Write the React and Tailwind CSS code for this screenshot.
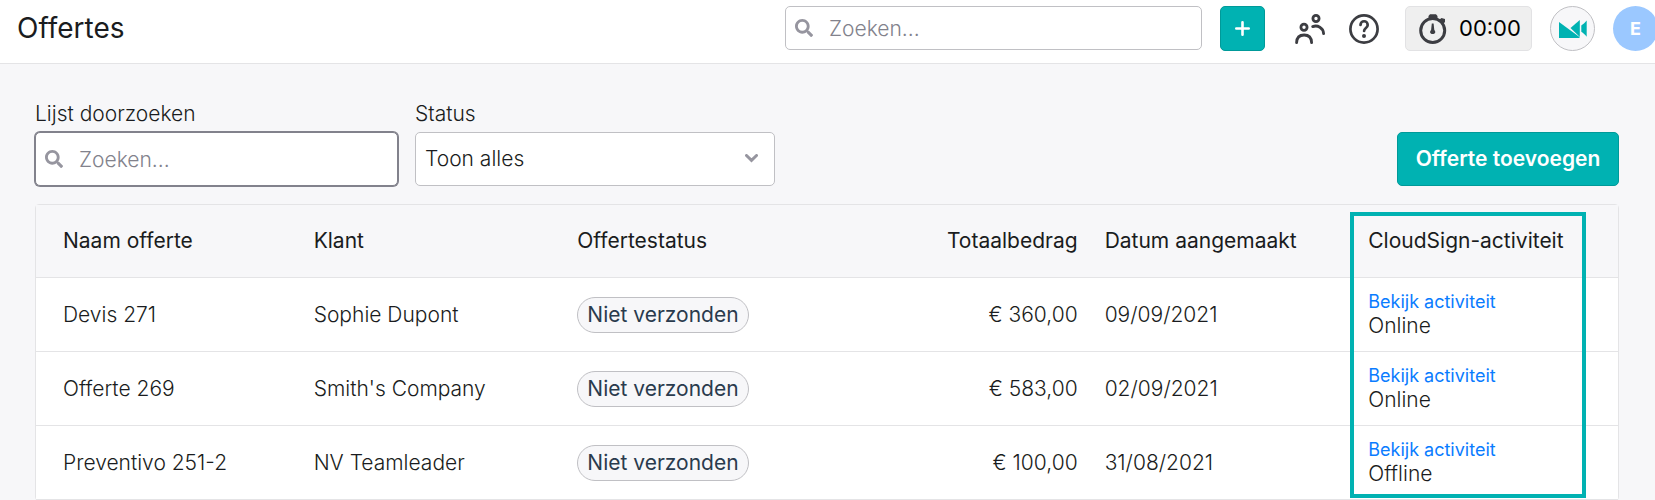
import { FaSearch } from 'react-icons/fa';

const quotations = [
  { name: 'Devis 271', customer: 'Sophie Dupont', status: 'Niet verzonden', total: '€ 360,00', created: '09/09/2021', activity: 'Online' },
  { name: 'Offerte 269', customer: "Smith's Company", status: 'Niet verzonden', total: '€ 583,00', created: '02/09/2021', activity: 'Online' },
  { name: 'Preventivo 251-2', customer: 'NV Teamleader', status: 'Niet verzonden', total: '€ 100,00', created: '31/08/2021', activity: 'Offline' },
];

function PeopleIcon() {
  return (
    <svg width="30" height="30" viewBox="0 0 30 30" fill="none" stroke="currentColor" strokeWidth="2.8" strokeLinecap="round" aria-hidden="true">
      <circle cx="21" cy="4.5" r="3.1" />
      <circle cx="9" cy="13.3" r="3.1" />
      <path d="M17.7 12.6c4.8-1.8 10.6 1 10.9 7" />
      <path d="M1.6 28.6c.2-5.2 3.2-7.6 7.5-7.6s7.3 2.4 7.5 7.6" />
    </svg>
  );
}

function HelpIcon() {
  return (
    <svg width="30" height="30" viewBox="0 0 30 30" fill="none" stroke="currentColor" strokeWidth="2.7" strokeLinecap="round" aria-hidden="true">
      <circle cx="15" cy="15" r="13.6" />
      <path d="M11.5 11c0-5 7.2-5 7.2 0 0 3-3.6 3-3.6 6" />
      <circle cx="15" cy="22" r="2" fill="currentColor" stroke="none" />
    </svg>
  );
}

function TimerIcon() {
  return (
    <svg width="28" height="30" viewBox="0 0 28 30" fill="none" stroke="currentColor" aria-hidden="true">
      <circle cx="13.7" cy="16.5" r="12" strokeWidth="3" />
      <path d="M9.5 4.5V2L11 .3h6L18.5 2v2.5zM20.5 5.5l2-1.5 3.5 1v3l-1.5 1.5z" fill="currentColor" stroke="none" />
      <path d="M12.8 9.5h1.8l.7 6.5c2 2 .8 4-1.6 4s-3.6-2-1.6-4z" fill="currentColor" stroke="none" />
    </svg>
  );
}

function CameraLogo() {
  return (
    <svg width="28" height="18" viewBox="0 0 28 18" fill="currentColor" aria-hidden="true">
      <path d="M0 2l20.5 15v1H0z" />
      <path d="M11.5 8l9.3-8v17z" />
      <path d="M22.3 5.5c1.5-1 3.7-3 5.4-5v16.3c-1.5-2-3.5-3.8-5.4-5z" />
    </svg>
  );
}

function SearchField({ id, label, className, inputClassName }) {
  return (
    <div className={className}>
      <FaSearch className="pointer-events-none absolute top-1/2 left-[10px] -translate-y-1/2 text-lg text-[#96959f]" />
      <input
        id={id}
        type="search"
        aria-label={label}
        placeholder="Zoeken..."
        className={inputClassName}
      />
    </div>
  );
}

function TopBar() {
  return (
    <header className="flex h-16 items-start overflow-hidden border-b border-[#e4e4e6] bg-white pt-[6px] pl-[17px]">
      <h1 className="text-[28px] leading-[44px] text-[#1a1c20]">Offertes</h1>
      <div className="-mr-[3px] ml-auto flex items-start gap-[18px] text-[#3c3d42]">
        <SearchField
          label="Zoeken"
          className="relative w-[417px]"
          inputClassName="block h-11 w-full rounded-[5px] border border-[#c0c0c4] bg-white pl-[43px] text-[21px] font-light placeholder:text-[#82828c] outline-none"
        />
        <button type="button" aria-label="Toevoegen" className="flex size-[45px] items-center justify-center rounded-[5px] border border-[#009a99] bg-[#00b2b2] text-white">
          <svg width="15" height="15" viewBox="0 0 15 15" stroke="currentColor" strokeWidth="2.6" strokeLinecap="round" aria-hidden="true">
            <path d="M7.5 1.3v12.4M1.3 7.5h12.4" />
          </svg>
        </button>
        <div className="flex h-[45px] items-center gap-6 pr-2 pl-3">
          <button type="button" aria-label="Contacten"><PeopleIcon /></button>
          <button type="button" aria-label="Help"><HelpIcon /></button>
        </div>
        <button type="button" className="flex h-[45px] w-[127px] items-center gap-3 rounded-[5px] border border-[#e2e2e4] bg-[#efefef] pl-[13px] text-[22px]">
          <TimerIcon />
          <span className="text-black">00:00</span>
        </button>
        <button type="button" aria-label="Videogesprek" className="flex size-[45px] items-center justify-center rounded-full border border-[#c0c0c4] bg-[#f7f7f9] text-[#00b2b2]">
          <CameraLogo />
        </button>
        <button type="button" className="size-[45px] rounded-full bg-[#9bc8ff] text-lg font-bold text-white">E</button>
      </div>
    </header>
  );
}

function Filters() {
  return (
    <div className="flex items-end">
      <div className="w-[363px]">
        <label htmlFor="list-search" className="block text-[21px] leading-8">Lijst doorzoeken</label>
        <SearchField
          id="list-search"
          label="Lijst doorzoeken"
          className="relative mt-0.5"
          inputClassName="block h-[54px] w-full rounded-[5px] border border-[#82828c] bg-white pl-[43px] text-[21px] font-light ring-1 ring-[#82828c] placeholder:text-[#82828c] outline-none"
        />
      </div>
      <div className="ml-[17px] w-[360px]">
        <label htmlFor="status" className="block text-[21px] leading-8">Status</label>
        <div className="relative mt-0.5">
          <select id="status" className="block h-[54px] w-full appearance-none rounded-[5px] border border-[#c0c0c4] bg-white px-[9px] text-[21px] font-light outline-none">
            <option>Toon alles</option>
          </select>
          <svg className="pointer-events-none absolute top-[22px] right-[17px] text-[#96959f]" width="13" height="9" viewBox="0 0 13 9" fill="none" stroke="currentColor" strokeWidth="3" aria-hidden="true">
            <path d="M1.5 1.5l5 4.8 5-4.8" strokeLinecap="round" />
          </svg>
        </div>
      </div>
      <button type="button" className="ml-auto h-[54px] w-[222px] rounded-[5px] border border-[#009a99] bg-[#00b2b2] text-[21px] font-semibold text-white">
        Offerte toevoegen
      </button>
    </div>
  );
}

function QuotationTable() {
  return (
    <div className="relative mt-[18px] rounded border border-[#e4e4e6]">
      <table className="w-full table-fixed border-separate border-spacing-0 text-left text-[21px]">
        <thead>
          <tr className="h-[73px] bg-[#f7f7f9] whitespace-nowrap [&>th]:border-b [&>th]:border-[#e4e4e6] [&>th]:pr-[13px] [&>th]:pl-[14px] [&>th]:font-normal [&>th:first-child]:pl-[27px]">
            <th>Naam offerte</th>
            <th>Klant</th>
            <th>Offertestatus</th>
            <th className="text-right">Totaalbedrag</th>
            <th>Datum aangemaakt</th>
            <th>CloudSign-activiteit</th>
          </tr>
        </thead>
        <tbody>
          {quotations.map((quotation) => (
            <tr
              key={quotation.name}
              className="h-[74px] bg-white [&>td]:border-b [&>td]:border-[#e4e4e6] [&>td]:pr-[13px] [&>td]:pl-[14px] [&>td:first-child]:pl-[27px]"
            >
              <td>{quotation.name}</td>
              <td>{quotation.customer}</td>
              <td>
                <span className="inline-flex h-9 items-center rounded-full border border-[#c0c0c4] bg-[#f7f7f9] px-[9px] font-normal text-[#2a3b4d]">
                  {quotation.status}
                </span>
              </td>
              <td className="text-right">{quotation.total}</td>
              <td>{quotation.created}</td>
              <td className="pb-0.5 leading-6">
                <a href="#activiteit" className="block text-lg leading-6 font-normal text-[#0a7cff]">Bekijk activiteit</a>
                {quotation.activity}
              </td>
            </tr>
          ))}
        </tbody>
      </table>
      {/* highlight around the CloudSign column */}
      <div className="pointer-events-none absolute top-[7px] right-8 bottom-[2px] w-[236px] border-4 border-[#00b2b2]" />
    </div>
  );
}

export default function App() {
  return (
    <div className="min-h-screen bg-[#f7f7f9] font-['Inter',sans-serif] text-[#1a1c20]">
      <TopBar />
      <main className="overflow-hidden pt-[34px] pr-9 pl-[35px] font-light">
        <Filters />
        <QuotationTable />
      </main>
    </div>
  );
}
